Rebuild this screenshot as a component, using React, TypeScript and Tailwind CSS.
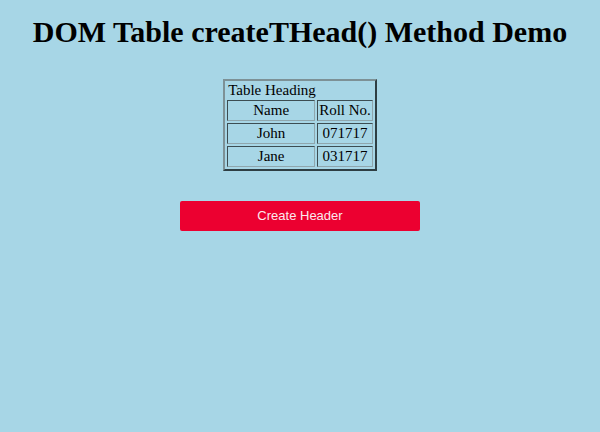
import React from 'react';

const rows = [
    { name: 'John', roll: '071717' },
    { name: 'Jane', roll: '031717' },
];

const cell =
    'border border-t-[#3c4d52] border-l-[#3c4d52] border-b-[#8fa6ad] border-r-[#8fa6ad] px-[1px] py-0 text-center';

const App: React.FC = () => {
    return (
        <div className="flex min-h-[432px] w-[600px] flex-col items-center bg-[#a7d6e6] font-['Liberation_Serif',serif] text-black">
            <h1 className="mt-[14px] text-[30px] leading-[36px] font-bold">DOM Table createTHead() Method Demo</h1>

            <table className="mt-[29px] border-separate border-spacing-[2px] border-2 border-t-[#7d9196] border-l-[#7d9196] border-b-[#2e3e43] border-r-[#2e3e43] text-[15px] leading-[19px]">
                <thead>
                    <tr>
                        <td colSpan={2} className="px-[1px] py-0 text-left leading-[15px]">
                            Table Heading
                        </td>
                    </tr>
                    <tr>
                        <th className={`${cell} w-[88px] font-normal`}>Name</th>
                        <th className={`${cell} font-normal`}>Roll No.</th>
                    </tr>
                </thead>
                <tbody>
                    {rows.map((r) => (
                        <tr key={r.name}>
                            <td className={cell}>{r.name}</td>
                            <td className={cell}>{r.roll}</td>
                        </tr>
                    ))}
                </tbody>
            </table>

            <button
                type="button"
                className="mt-[30px] h-[30px] w-[240px] rounded-[2px] bg-[#ec0030] font-['Liberation_Sans',sans-serif] text-[13px] text-[#fbe9ee]"
            >
                Create Header
            </button>
        </div>
    );
};

export default App;
